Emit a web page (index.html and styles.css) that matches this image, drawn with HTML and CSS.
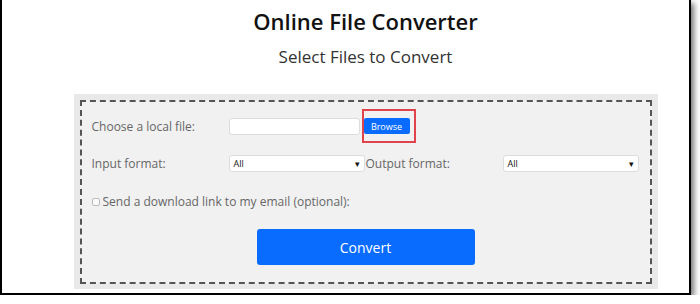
FILE: index.html
```html
<!DOCTYPE html>
<html lang="en">
<head>
  <meta charset="UTF-8">
  <title>Online File Converter</title>
  <link rel="stylesheet" href="styles.css">
</head>
<body>
  <div class="frame">
    <h1 class="title">Online File Converter</h1>
    <h2 class="subtitle">Select Files to Convert</h2>

    <div class="panel">
      <form class="dashed" autocomplete="off">
        <div class="row row-file">
          <label class="label">Choose a local file:</label>
          <input type="text" class="file-input">
          <span class="highlight">
            <button type="button" class="browse-btn">Browse</button>
          </span>
        </div>

        <div class="row row-format">
          <label class="label">Input format:</label>
          <div class="select"><span>All</span><span class="arrow">&#9662;</span></div>
          <label class="label">Output format:</label>
          <div class="select"><span>All</span><span class="arrow">&#9662;</span></div>
        </div>

        <div class="row row-email">
          <span class="checkbox"></span>
          <span class="label">Send a download link to my email (optional):</span>
        </div>

        <div class="row row-submit">
          <button type="submit" class="convert-btn">Convert</button>
        </div>
      </form>
    </div>
  </div>
</body>
</html>
```

FILE: styles.css
```css
* {
  box-sizing: border-box;
}

body {
  margin: 0;
  background: #fff;
  font-family: 'Open Sans', sans-serif;
  color: #333;
}

.frame {
  width: 691px;
  height: 295px;
  padding-left: 40px;
  border: 2px solid #000;
  border-top: none;
  background: #fff;
  box-shadow: 3px 3px 6px rgba(0, 0, 0, 0.55);
}

.title {
  margin: 0;
  padding-top: 7px;
  text-align: center;
  font-size: 22px;
  font-weight: 600;
  line-height: 28px;
  color: #111;
}

.subtitle {
  margin: 11px 0 0;
  text-align: center;
  font-size: 17px;
  font-weight: 400;
  line-height: 22px;
  color: #333;
}

.panel {
  width: 584px;
  margin: 26px auto 0;
  padding: 6px 6px 5px;
  background: #e9e9e9;
}

.dashed {
  border: 2px dashed #555;
  background: #f1f1f1;
  padding: 7px 10px 17px;
}

.row {
  display: flex;
  align-items: center;
}

.label {
  width: 137px;
  font-size: 12px;
  color: #666;
}

.row-file {
  height: 34px;
}

.file-input {
  width: 131px;
  height: 17px;
  margin: 0;
  padding: 0 4px;
  border: 1px solid #ddd;
  border-radius: 3px;
  background: #fff;
}

.highlight {
  display: inline-flex;
  margin-left: 2px;
  padding: 7px 4px 7px 0;
  border: 2px solid #e0434b;
}

.browse-btn {
  width: 46px;
  height: 16px;
  padding: 0;
  border: none;
  border-radius: 2px;
  background: #0a6cff;
  color: #fff;
  font-family: 'Open Sans', sans-serif;
  font-size: 9px;
}

.row-format {
  margin-top: 8px;
  height: 25px;
}

.select {
  width: 136px;
  height: 17px;
  display: flex;
  align-items: center;
  justify-content: space-between;
  padding: 0 4px;
  border: 1px solid #ddd;
  border-radius: 3px;
  background: #fff;
  font-size: 9px;
  color: #111;
}

.select .arrow {
  font-size: 9px;
}

.row-format .label + .select {
  margin-right: 1px;
}

.row-email {
  margin-top: 13px;
  height: 25px;
}

.row-email .label {
  width: auto;
}

.checkbox {
  width: 8px;
  height: 8px;
  margin-right: 3px;
  border: 1px solid #bbb;
  border-radius: 2px;
  background: #fafafa;
}

.row-submit {
  justify-content: center;
  margin-top: 15px;
}

.convert-btn {
  width: 218px;
  height: 36px;
  border: none;
  border-radius: 3px;
  background: #0a6cff;
  color: #fff;
  font-family: 'Open Sans', sans-serif;
  font-size: 14px;
}
```
